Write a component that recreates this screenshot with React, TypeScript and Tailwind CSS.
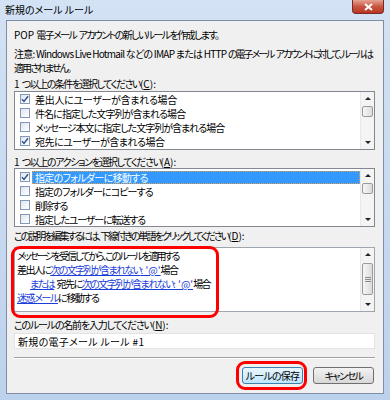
import React from 'react';

const font = "font-['Meiryo_UI','Noto_Sans_CJK_JP',sans-serif]";

const Check: React.FC<{ checked?: boolean }> = ({ checked }) => (
    <span className="w-[10px] h-[10px] shrink-0 border border-[#8399b7] bg-gradient-to-br from-[#dfe5ee] to-white flex items-center justify-center">
        {checked && (
            <svg width="8" height="8" viewBox="0 0 8 8">
                <path d="M1 4.2 L3 6.4 L7 1.2" fill="none" stroke="#2f4f8a" strokeWidth="1.4" />
            </svg>
        )}
    </span>
);

const ScrollBar: React.FC<{ thumbTop: number; thumbH: number; grip?: boolean }> = ({ thumbTop, thumbH, grip }) => (
    <div className="w-[14px] shrink-0 bg-[#f4f4f4] border-l border-[#e8e8e8] flex flex-col items-center">
        <div className="h-[13px] flex items-center justify-center">
            <span className="w-0 h-0 border-x-[3px] border-x-transparent border-b-[3px] border-b-[#222]" />
        </div>
        <div className="flex-1 w-full relative">
            <div
                className="absolute left-[1px] right-[1px] rounded-[2px] border border-[#9a9a9a] bg-gradient-to-r from-[#f6f6f6] to-[#dcdcdc] flex flex-col items-center justify-center gap-[1px]"
                style={{ top: thumbTop, height: thumbH }}
            >
                {grip && (
                    <>
                        <span className="w-[6px] h-px bg-[#8a8a8a]" />
                        <span className="w-[6px] h-px bg-[#8a8a8a]" />
                        <span className="w-[6px] h-px bg-[#8a8a8a]" />
                    </>
                )}
            </div>
        </div>
        <div className="h-[13px] flex items-center justify-center">
            <span className="w-0 h-0 border-x-[3px] border-x-transparent border-t-[3px] border-t-[#222]" />
        </div>
    </div>
);

const Row: React.FC<{ label: string; tr: string; checked?: boolean; selected?: boolean }> = ({ label, tr, checked, selected }) => (
    <div className="h-[14px] flex items-center pl-[5px]">
        <Check checked={checked} />
        <span
            className={
                selected
                    ? `ml-[2px] flex-1 h-[13px] pl-[2px] flex items-center bg-[#3399ff] text-white border border-dotted border-[#e0a050] ${tr}`
                    : `ml-[2px] pl-[3px] flex items-center ${tr}`
            }
        >
            {label}
        </span>
    </div>
);

const Link: React.FC<{ children: React.ReactNode }> = ({ children }) => (
    <span className="text-[#1a3cd8] underline underline-offset-[1px]">{children}</span>
);

// "(C):" style accelerator suffix, kept at normal spacing
const Key: React.FC<{ k: string }> = ({ k }) => (
    <span className="tracking-normal">
        (<span className="underline">{k}</span>):
    </span>
);

const Sp = () => <span className="tracking-normal"> </span>;

export default function App() {
    return (
        <div className={`w-[390px] h-[400px] overflow-hidden bg-gradient-to-b from-[#d3e2f4] to-[#bcd2ec] flex flex-col ${font} text-[10px] text-black [font-feature-settings:'palt'_1] whitespace-nowrap`}>
            {/* title bar */}
            <div className="h-[20px] flex items-start justify-between">
                <span className="pl-[5px] pt-[3px] leading-[14px]">新規のメール ルール</span>
                <div className="mr-[6px] w-[32px] h-[14px] rounded-b-[4px] border border-t-0 border-[#7a2a22] bg-gradient-to-b from-[#e4a394] via-[#c95542] to-[#b93422] flex items-center justify-center">
                    <svg width="9" height="8" viewBox="0 0 9 8">
                        <path d="M1 1 L8 7 M8 1 L1 7" stroke="white" strokeWidth="2" />
                    </svg>
                </div>
            </div>

            {/* client area */}
            <div className="mx-[6px] mb-[6px] flex-1 border border-[#7f8ea3] bg-[#f0f0f0] flex flex-col pl-[7px] pr-[8px]">
                <div className="mt-[7px] leading-[14px] tracking-[-1.6px]">
                    <span className="tracking-normal">POP </span>電子メール<Sp />アカウントの新しいルールを作成します。
                </div>
                <div className="mt-[5px] leading-[14px]">
                    <span className="tracking-[-0.75px]">注意: Windows Live Hotmail などの IMAP または HTTP </span>
                    <span className="tracking-[-2px]">の電子メール<Sp />アカウントに対して、ルールは</span>
                    <br />
                    <span className="tracking-[-2px]">適用されません。</span>
                </div>

                <div className="mt-[2px] leading-[14px] tracking-[-1.5px]">
                    <span className="tracking-normal">1 </span>つ以上の条件を選択してください<Key k="C" />
                </div>
                <div className="h-[59px] border border-[#828790] bg-white flex">
                    <div className="flex-1 flex flex-col">
                        <Row label="差出人にユーザーが含まれる場合" tr="tracking-[-0.3px]" checked />
                        <Row label="件名に指定した文字列が含まれる場合" tr="tracking-[-0.9px]" />
                        <Row label="メッセージ本文に指定した文字列が含まれる場合" tr="tracking-[-1px]" />
                        <Row label="宛先にユーザーが含まれる場合" tr="tracking-[-0.5px]" checked />
                    </div>
                    <ScrollBar thumbTop={1} thumbH={11} />
                </div>

                <div className="mt-[5px] leading-[13px] tracking-[-1.4px]">
                    <span className="tracking-normal">1 </span>つ以上のアクションを選択してください<Key k="A" />
                </div>
                <div className="h-[59px] border border-[#828790] bg-white flex">
                    <div className="flex-1 flex flex-col pt-[1px]">
                        <Row label="指定のフォルダーに移動する" tr="tracking-[-0.7px]" checked selected />
                        <Row label="指定のフォルダーにコピーする" tr="tracking-[-0.9px]" />
                        <Row label="削除する" tr="tracking-[-1.5px]" />
                        <Row label="指定したユーザーに転送する" tr="tracking-[-1.1px]" />
                    </div>
                    <ScrollBar thumbTop={1} thumbH={11} />
                </div>

                <div className="mt-[2px] leading-[14px] tracking-[-2px]">
                    この説明を編集するには、下線付きの単語をクリックしてください<Key k="D" />
                </div>
                <div className="mt-[4px] h-[65px] border border-[#9ea5ae] bg-white flex relative">
                    <div className="flex-1 flex flex-col pt-[1px] pl-[2px] leading-[14px]">
                        <div className="tracking-[-2.1px]">メッセージを受信してから、このルールを適用する</div>
                        <div className="tracking-[-1.6px]">
                            差出人に<Link>次の文字列が含まれない<span className="tracking-normal">: '@'</span></Link>場合
                        </div>
                        <div className="pl-[13px] tracking-[-1.5px]">
                            <Link>または</Link><Sp />宛先に<Link>次の文字列が含まれない<span className="tracking-normal">: '@'</span></Link>場合
                        </div>
                        <div className="tracking-[-1.4px]">
                            <Link>迷惑メール</Link>に移動する
                        </div>
                    </div>
                    <ScrollBar thumbTop={2} thumbH={32} grip />
                    <div className="absolute left-[-4px] top-[-2px] w-[208px] h-[72px] border-[3px] border-[#ff0000] rounded-[9px] pointer-events-none" />
                </div>

                <div className="mt-[6px] leading-[14px] tracking-[-1.2px]">
                    このルールの名前を入力してください<Key k="N" />
                </div>
                <div className="mt-[1px] h-[16px] border border-[#e3e3e3] bg-white flex items-center pl-[3px] tracking-[0.3px]">
                    新規の電子メール ルール #1
                </div>

                <div className="mt-[8px] h-px bg-[#a0a0a0]" />
                <div className="h-px bg-white" />

                <div className="mt-[8px] flex justify-end gap-[10px] pr-[1px]">
                    <div className="relative">
                        <button className="w-[61px] h-[17px] rounded-[3px] border border-[#3c7fb1] bg-gradient-to-b from-[#eaf6fd] to-[#bee6fd] flex items-center justify-center leading-none tracking-[-0.8px]">
                            ルールの保存
                        </button>
                        <div className="absolute left-[-6px] top-[-6px] w-[71px] h-[29px] border-[3px] border-[#ff0000] rounded-[9px] pointer-events-none" />
                    </div>
                    <button className="w-[61px] h-[17px] rounded-[3px] border border-[#707070] bg-gradient-to-b from-[#f2f2f2] to-[#d8d8d8] flex items-center justify-center leading-none tracking-[-1.5px]">
                        キャンセル
                    </button>
                </div>
            </div>
        </div>
    );
}
